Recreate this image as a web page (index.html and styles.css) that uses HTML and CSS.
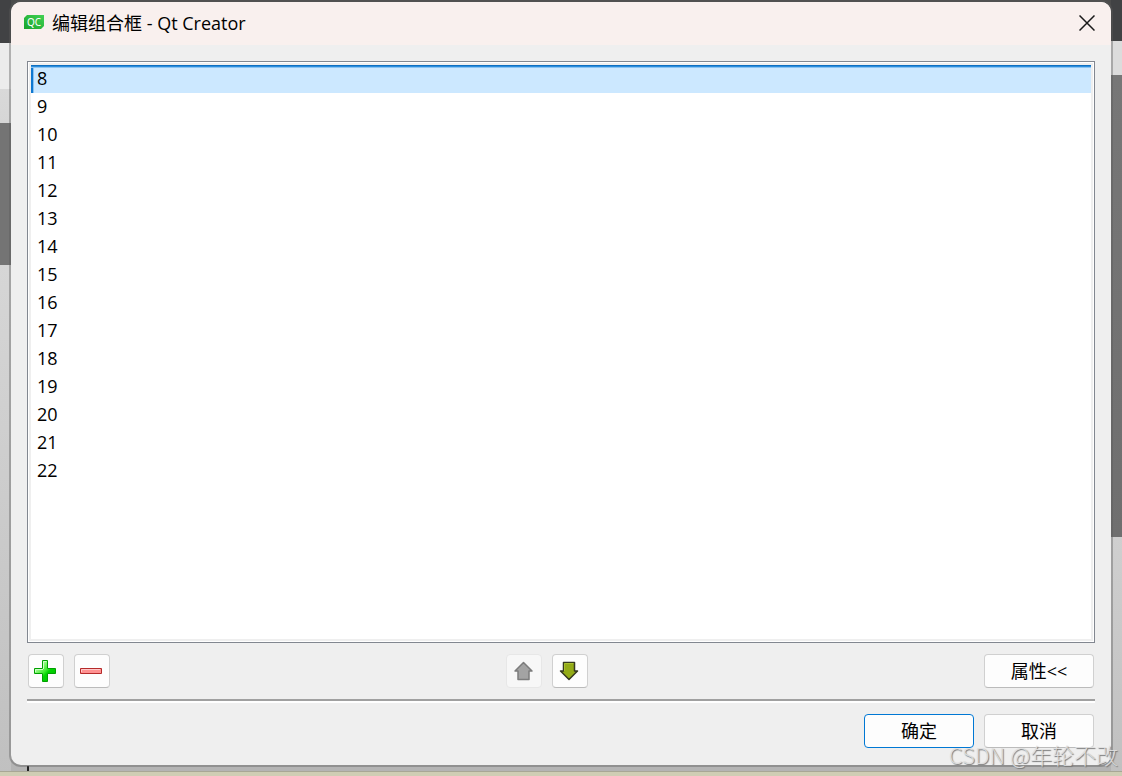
FILE: index.html
```
<!DOCTYPE html>
<html lang="zh-CN">
<head>
  <meta charset="UTF-8">
  <meta name="viewport" content="width=device-width, initial-scale=1.0">
  <title>编辑组合框 - Qt Creator</title>
  <link rel="stylesheet" href="styles.css">
</head>
<body>

  <main class="dialog">
    <header class="titlebar">
      <svg class="logo" width="20" height="15" viewBox="0 0 20 15">
        <defs>
          <linearGradient id="qc" x1="0" y1="1" x2="1" y2="0">
            <stop offset="0" stop-color="#17a32b"/>
            <stop offset="1" stop-color="#43d153"/>
          </linearGradient>
        </defs>
        <path d="M3 0H20V11L17 14H0V3Z" fill="url(#qc)"/>
        <text x="10" y="11" text-anchor="middle" class="logo-text">QC</text>
      </svg>
      <h1>编辑组合框 - Qt Creator</h1>
      <button class="close" aria-label="关闭">
        <svg width="16" height="16" viewBox="0 0 16 16"><path d="M.5 .5L15.500 15.500M15.500 .5L.5 15.500" stroke="#1a1a1a" stroke-width="1.500"/></svg>
      </button>
    </header>

    <div class="content">
      <div class="list-frame">
        <select class="list" size="20" aria-label="组合框项目">
          <option selected>8</option>
          <option>9</option>
          <option>10</option>
          <option>11</option>
          <option>12</option>
          <option>13</option>
          <option>14</option>
          <option>15</option>
          <option>16</option>
          <option>17</option>
          <option>18</option>
          <option>19</option>
          <option>20</option>
          <option>21</option>
          <option>22</option>
        </select>
      </div>

      <div class="toolbar">
        <div class="group">
          <button class="btn icon" aria-label="新建项目">
            <svg width="24" height="24" viewBox="0 0 24 24">
              <defs>
                <linearGradient id="plus" x1="0" y1="0" x2="1" y2="1">
                  <stop offset="0.2" stop-color="#b6ffa6"/>
                  <stop offset="0.5" stop-color="#3cec2c"/>
                  <stop offset="0.6" stop-color="#00d500"/>
                  <stop offset="1" stop-color="#00b800"/>
                </linearGradient>
              </defs>
              <path d="M8.500 1.500H13.500V9.500H21.500V14.500H13.500V22.500H8.500V14.500H.5V9.500H8.500Z" fill="url(#plus)" stroke="#00a000"/>
              <path d="M9.500 10V2.500H12.500M1.500 13V10.500H9" fill="none" stroke="#ccffc4"/>
            </svg>
          </button>
          <button class="btn icon" aria-label="删除项目">
            <svg width="24" height="24" viewBox="0 0 24 24">
              <path d="M.5 9.500H21.500V14.500H.5Z" fill="#ff9191" stroke="#b52a2a"/>
              <path d="M1.500 13V10.500H20" fill="none" stroke="#ffc9c9"/>
            </svg>
          </button>
        </div>
        <div class="group">
          <button class="btn icon" aria-label="上移项目" disabled>
            <svg width="24" height="24" viewBox="0 0 24 24"><path d="M11.500 3.500L20 12H17V20.500H6V12H3Z" fill="#a3a3a3" stroke="#7c7c7c" stroke-width="1.500" stroke-linejoin="round"/></svg>
          </button>
          <button class="btn icon" aria-label="下移项目">
            <svg width="24" height="24" viewBox="0 0 24 24">
              <path d="M5.500 3.500H16.500V12H19.500L11 20.500L2.500 12H5.500Z" fill="#93ab16" stroke="#35391f" stroke-width="1.500" stroke-linejoin="round"/>
              <path d="M6.500 12V4.500H15.500" fill="none" stroke="#a9c02e"/>
            </svg>
          </button>
        </div>
        <button class="btn">属性&lt;&lt;</button>
      </div>

      <hr>

      <div class="actions">
        <button class="btn default">确定</button>
        <button class="btn">取消</button>
      </div>
    </div>
  </main>

  <span class="watermark">CSDN @年轮不改</span>

</body>
</html>
```
FILE: styles.css
```
* {
  box-sizing: border-box;
}
body {
  margin: 0;
  min-height: 100vh;
  padding: 2px 11px 11px;
  display: flex;
  font-family: "Open Sans", "Noto Sans CJK SC", sans-serif;
  font-size: 18px;
  color: #000;
  /* windows behind the dialog: bottom strip, top bar, left side, right side */
  background:
    linear-gradient(#a8a795 1px, #cfcdb4 1px) left bottom / 100% 5px no-repeat,
    linear-gradient(#222, #222) 27px 100% / 2px 10px no-repeat,
    linear-gradient(#b4b4b4, #b4b4b4) center bottom / calc(100% - 22px) 20px no-repeat,
    linear-gradient(#4b4b4b, #4b4b4b) center top / calc(100% - 22px) 20px no-repeat,
    linear-gradient(#414244 43px, #ececec 43px, #ececec 89px, #d9d9d9 89px, #d6d6d6 123px, #747474 123px, #747474 265px, #d6d6d6 265px, #c0c0c0) left top / 11px 100% no-repeat,
    linear-gradient(#414244 41px, #dcdcdc 41px, #dcdcdc 75px, #777 75px, #6f6f6f 537px, #cfcfcf 537px, #c0c0c0) right top / 11px 100% no-repeat,
    #bbb;
}
.dialog {
  flex: 1;
  min-width: 0;
  display: flex;
  flex-direction: column;
  background: #efefef;
  border-radius: 10px;
  box-shadow: 0 0 0 2px rgba(90, 90, 90, 0.4);
}
.titlebar {
  display: flex;
  align-items: center;
  height: 43px;
  padding: 0 16px 2px 13px;
  background: #f9f0ee;
  border-radius: 10px 10px 0 0;
}
.logo-text {
  font: 10px "Noto Sans", sans-serif;
  fill: #fff;
}
h1 {
  margin: 0 0 0 8px;
  flex: 1;
  font-size: 18px;
  font-weight: normal;
  line-height: 24px;
}
.close {
  display: flex;
  padding: 0;
  border: 0;
  background: none;
}
.content {
  flex: 1;
  display: flex;
  flex-direction: column;
  padding: 16px 16px 17px;
}
.list-frame {
  flex: 1;
  display: flex;
  padding: 3px;
  border: 1px solid #828790;
  box-shadow: inset 0 0 0 1px #fff;
}
.list {
  flex: 1;
  min-width: 0;
  margin: 0;
  padding: 0;
  border: 0;
  border-radius: 0;
  outline: none;
  overflow: auto;
  background: #fff;
  color: #000;
  font: inherit;
}
.list option {
  height: 28px;
  padding: 1px 6px 0;
}
.list option:checked {
  color: #000;
  background: linear-gradient(#0f6fc0 1px, #2b8ede 1px, #2b8ede 2px, #8ac3f2 2px, #8ac3f2 3px, transparent 3px),
    linear-gradient(90deg, #0f78d0 2px, #8ac3f2 2px, #8ac3f2 3px, #cce8ff 3px);
}
.toolbar {
  display: flex;
  justify-content: space-between;
  padding: 11px 1px;
}
.group {
  display: flex;
  gap: 10px;
}
.btn {
  width: 110px;
  height: 34px;
  padding: 0;
  display: flex;
  align-items: center;
  justify-content: center;
  background: #fdfdfd;
  border: 1px solid #d0d0d0;
  border-bottom-color: #bbb;
  border-radius: 4px;
  color: #000;
  font: inherit;
  line-height: 24px;
}
.icon {
  width: 36px;
}
.btn:disabled {
  background: #f7f7f7;
  border-color: #e7e7e7;
}
.default {
  border-color: #0078d4;
}
hr {
  width: 100%;
  height: 4px;
  margin: 0;
  border: 0;
  border-top: 2px solid #a0a0a0;
  border-bottom: 2px solid #fff;
}
.actions {
  display: flex;
  justify-content: flex-end;
  gap: 10px;
  padding: 11px 1px 0;
}
/* lies over the dialog corner */
.watermark {
  position: absolute;
  right: 4px;
  bottom: 6px;
  font-family: "Noto Sans CJK SC", sans-serif;
  font-size: 22px;
  font-weight: 300;
  line-height: 32px;
  color: rgba(225, 225, 225, 0.9);
  text-shadow: 1px 1px 1px #777;
  pointer-events: none;
}
```
